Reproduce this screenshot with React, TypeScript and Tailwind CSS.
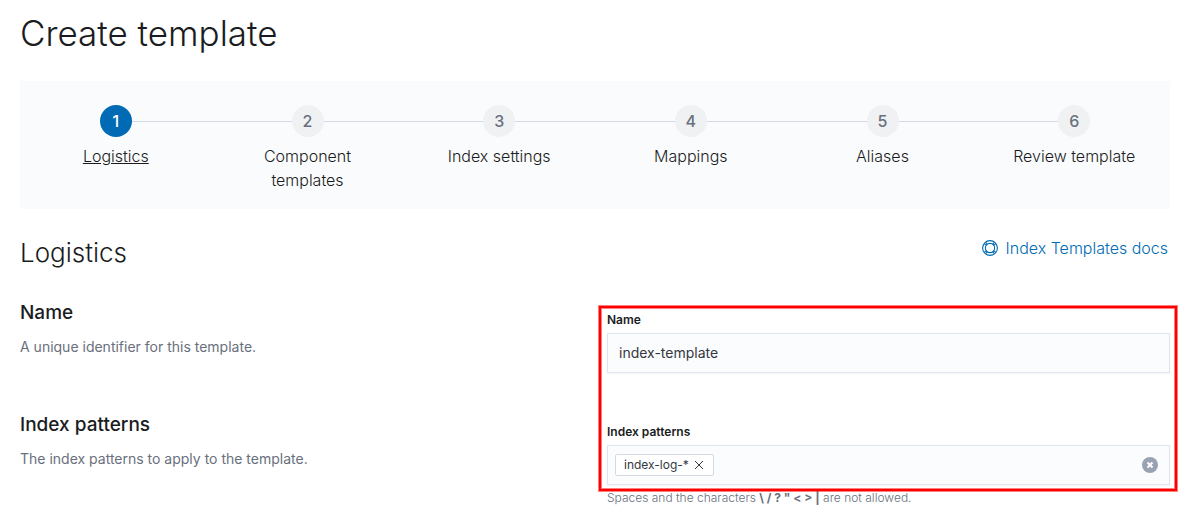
import clsx from "clsx";

const steps = [
  "Logistics",
  "Component templates",
  "Index settings",
  "Mappings",
  "Aliases",
  "Review template",
];

const HelpIcon = () => (
  <svg width="16" height="16" viewBox="0 0 16 16" fill="none" stroke="currentColor" aria-hidden="true">
    <circle cx="8" cy="8" r="7.4" strokeWidth="1.1" />
    <circle cx="8" cy="8" r="4.6" strokeWidth="1.1" />
    <path
      d="M2 3.4 4.6 5.6M3.4 2 5.6 4.6M14 3.4 11.4 5.6M12.6 2 10.4 4.6M2 12.6 4.6 10.4M3.4 14 5.6 11.4M14 12.6 11.4 10.4M12.6 14 10.4 11.4"
      strokeWidth="1.1"
    />
  </svg>
);

const StepsHeader = () => (
  <ol className="grid grid-cols-6 bg-[#fafbfd] pt-6 pb-[17px]">
    {steps.map((title, i) => (
      <li key={title} className="flex flex-col items-center">
        <div className="flex w-full items-center">
          <span className={clsx("h-px flex-1", i > 0 && "bg-[#d3dae6]")} />
          <span
            className={clsx(
              "flex size-8 items-center justify-center rounded-full text-base font-medium",
              i === 0 ? "bg-[#006bb4] text-white" : "bg-[#f0f1f3] text-[#69707d]"
            )}
          >
            {i + 1}
          </span>
          <span className={clsx("h-px flex-1", i < steps.length - 1 && "bg-[#d3dae6]")} />
        </div>
        <button
          type="button"
          className={clsx("mt-[7px] max-w-32 text-base font-light", i === 0 && "underline")}
        >
          {title}
        </button>
      </li>
    ))}
  </ol>
);

const Description = ({ title, text }: { title: string; text: string }) => (
  <div>
    <h3 className="text-[19px] leading-6 font-medium">{title}</h3>
    <p className="mt-3 text-sm leading-5 text-[#69707d]">{text}</p>
  </div>
);

export default function App() {
  return (
    <main className="bg-white pt-[9px] pr-[15px] pb-2 pl-5 font-['Inter',sans-serif] text-[#1a1c21]">
      <h1 className="mb-6 text-[35px] leading-12 font-light">Create template</h1>

      <StepsHeader />

      <div className="mt-6 flex items-start justify-between">
        <h2 className="text-[26px] leading-10 font-light">Logistics</h2>
        <a href="#docs" className="mt-[3px] flex items-center gap-2 pr-0.5 text-base font-light text-[#006bb4]">
          <HelpIcon />
          Index Templates docs
        </a>
      </div>

      <div className="relative mt-7 grid grid-cols-2 gap-x-6 gap-y-10">
        <Description title="Name" text="A unique identifier for this template." />
        <div className="pt-[11px]">
          <label htmlFor="name" className="mb-[5px] block text-xs font-semibold">
            Name
          </label>
          <input
            id="name"
            type="text"
            defaultValue="index-template"
            className="block h-10 w-full border border-[#e0e4ec] bg-[#fbfcfd] px-[11px] pb-0.5 text-sm text-[#343741] shadow-xs outline-none"
          />
        </div>

        <Description title="Index patterns" text="The index patterns to apply to the template." />
        <div className="pt-[11px]">
          <label htmlFor="patterns" className="mb-[5px] block text-xs font-semibold">
            Index patterns
          </label>
          <div className="flex h-10 items-center border border-[#e0e4ec] bg-[#fbfcfd] pr-[11px] pl-[7px] shadow-xs">
            <span className="flex h-[22px] items-center gap-1 rounded-xs border border-[#d3dae6] bg-white px-2 text-xs text-[#343741]">
              index-log-*
              <button type="button" aria-label="Remove index-log-*">
                <svg width="12" height="12" viewBox="0 0 12 12" stroke="currentColor">
                  <path d="M2 2l8 8M10 2l-8 8" />
                </svg>
              </button>
            </span>
            <input id="patterns" type="text" className="min-w-0 flex-1 bg-transparent px-1 text-sm outline-none" />
            <button type="button" aria-label="Clear patterns">
              <svg width="16" height="16" viewBox="0 0 16 16">
                <circle cx="8" cy="8" r="8" fill="#98a2b3" />
                <path d="M5.5 5.5l5 5M10.5 5.5l-5 5" stroke="#fff" strokeWidth="2" />
              </svg>
            </button>
          </div>
          <p className="mt-[5px] text-xs font-light text-[#69707d]">
            Spaces and the characters <strong className="font-bold">{'\\ / ? " < > |'}</strong> are not allowed.
          </p>
        </div>

        {/* Highlight around the form fields */}
        <div className="pointer-events-none absolute top-[5px] -right-[7px] bottom-[15px] left-1/2 ml-1 border-2 border-[#ff0000] ring-1 ring-[#ff0000]/50 inset-ring-1 inset-ring-[#ff0000]/50" />
      </div>
    </main>
  );
}
